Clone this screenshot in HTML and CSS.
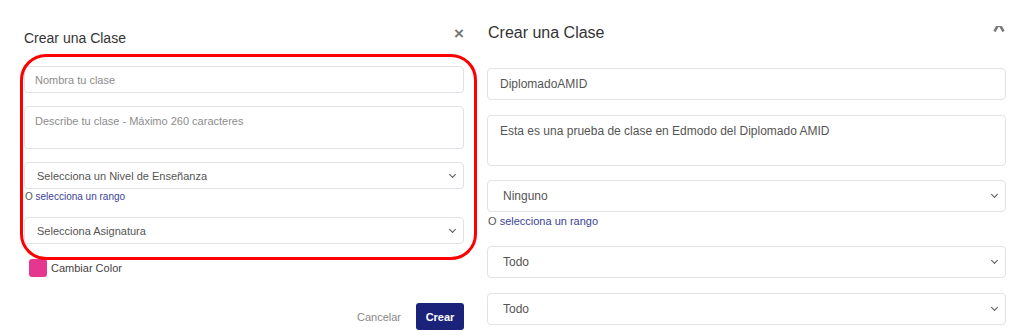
FILE: index.html
```html
<!DOCTYPE html>
<html lang="es">
<head>
  <meta charset="UTF-8" />
  <title>Crear una Clase</title>
  <link rel="stylesheet" href="styles.css">
</head>
<body>
  <!-- Modal vacío (antes de rellenar) -->
  <div class="modal modal-small">
    <div class="modal-head">
      <h2>Crear una Clase</h2>
      <span class="close">&times;</span>
    </div>

    <input type="text" class="field" placeholder="Nombra tu clase" />
    <textarea class="field area" placeholder="Describe tu clase - Máximo 260 caracteres"></textarea>

    <div class="select-wrap">
      <select class="field">
        <option>Selecciona un Nivel de Enseñanza</option>
      </select>
    </div>
    <div class="range">O <a href="#">selecciona un rango</a></div>

    <div class="select-wrap second">
      <select class="field">
        <option>Selecciona Asignatura</option>
      </select>
    </div>

    <div class="color-row">
      <span class="swatch"></span>
      <span>Cambiar Color</span>
    </div>

    <div class="actions">
      <a href="#" class="cancel">Cancelar</a>
      <button class="btn-create">Crear</button>
    </div>

    <div class="highlight"></div>
  </div>

  <!-- Modal con datos -->
  <div class="modal modal-large">
    <div class="modal-head">
      <h2>Crear una Clase</h2>
      <span class="close-cut">
        <svg width="12" height="6" viewBox="0 0 12 6">
          <path d="M6 -2.5 L1.5 5.5 M6 -2.5 L10.5 5.5" stroke="#7a7a7a" stroke-width="2.6" fill="none" />
        </svg>
      </span>
    </div>

    <input type="text" class="field" value="DiplomadoAMID" />
    <textarea class="field area">Esta es una prueba de clase en Edmodo del Diplomado AMID</textarea>

    <div class="select-wrap">
      <select class="field">
        <option>Ninguno</option>
      </select>
    </div>
    <div class="range">O <a href="#">selecciona un rango</a></div>

    <div class="select-wrap second">
      <select class="field">
        <option>Todo</option>
      </select>
    </div>
    <div class="select-wrap third">
      <select class="field">
        <option>Todo</option>
      </select>
    </div>
  </div>
</body>
</html>
```

FILE: styles.css
```css
body {
  margin: 0;
  display: flex;
  font-family: 'Liberation Sans', Arial, sans-serif;
  color: #333;
  background: #fff;
  height: 336px;
  overflow: hidden;
}
h2 {
  margin: 0;
  font-weight: normal;
}
input, textarea, select, button {
  font-family: inherit;
}

.modal {
  display: flex;
  flex-direction: column;
  position: relative;
}
.modal-small {
  width: 440px;
  padding-left: 24px;
  font-size: 11px;
}
.modal-large {
  width: 519px;
  margin-left: 23px;
  font-size: 12px;
}

.modal-head {
  display: flex;
  justify-content: space-between;
  align-items: flex-start;
}
.modal-small .modal-head {
  padding-top: 28px;
  height: 20px;
  margin-bottom: 18px;
}
.modal-small h2 {
  font-size: 14px;
  line-height: 20px;
}
.close {
  font-size: 17px;
  font-weight: bold;
  color: #777;
  line-height: 12px;
  margin-top: 0;
  margin-right: 0;
}
.modal-large .modal-head {
  padding-top: 23px;
  height: 20px;
  margin-bottom: 25px;
}
.modal-large h2 {
  font-size: 16px;
  line-height: 20px;
  padding-left: 1px;
}
.close-cut {
  display: block;
  margin-top: 3px;
  margin-right: 1px;
  line-height: 0;
}

.field {
  display: block;
  box-sizing: border-box;
  width: 100%;
  margin: 0;
  border: 1px solid #dfe2e6;
  border-radius: 4px;
  background: #fff;
  color: #555;
  outline: none;
}
.field::placeholder {
  color: #8d8d8d;
}
textarea.field {
  resize: none;
}
select.field {
  appearance: none;
  -webkit-appearance: none;
}

.modal-small .field {
  height: 27px;
  font-size: 11px;
  padding: 0 10px;
}
.modal-small .area {
  height: 43px;
  margin-top: 13px;
  padding-top: 7px;
  line-height: 14px;
}
.modal-small select.field {
  padding-left: 12px;
}
.modal-small .select-wrap {
  margin-top: 13px;
}
.modal-small .select-wrap.second {
  margin-top: 14px;
}

.modal-large .field {
  height: 32px;
  font-size: 12px;
  padding: 0 12px;
}
.modal-large .area {
  height: 51px;
  margin-top: 15px;
  padding-top: 8px;
  line-height: 15px;
}
.modal-large select.field {
  padding-left: 15px;
}
.modal-large .select-wrap {
  margin-top: 14px;
}
.modal-large .select-wrap.second {
  margin-top: 18px;
}
.modal-large .select-wrap.third {
  margin-top: 15px;
}

.select-wrap {
  position: relative;
}
.select-wrap::after {
  content: '';
  position: absolute;
  right: 9px;
  top: 50%;
  width: 4px;
  height: 4px;
  margin-top: -4px;
  border-right: 1.5px solid #555;
  border-bottom: 1.5px solid #555;
  transform: rotate(45deg);
}

.range {
  color: #555;
}
.range a {
  color: #3b3f98;
  text-decoration: none;
}
.modal-small .range {
  font-size: 10px;
  line-height: 12px;
  margin-top: 2px;
  padding-left: 1px;
}
.modal-large .range {
  font-size: 11px;
  line-height: 13px;
  margin-top: 3px;
  padding-left: 1px;
}

.color-row {
  display: flex;
  align-items: center;
  gap: 4px;
  margin-top: 15px;
  margin-left: 5px;
  color: #444;
}
.swatch {
  width: 18px;
  height: 18px;
  border-radius: 3px;
  background: #e63790;
}

.actions {
  display: flex;
  justify-content: flex-end;
  align-items: center;
  gap: 15px;
  margin-top: 26px;
}
.cancel {
  color: #888;
  text-decoration: none;
}
.btn-create {
  height: 27px;
  width: 48px;
  padding: 0;
  border: none;
  border-radius: 3px;
  background: #1b227a;
  color: #fff;
  font-size: 11px;
  font-weight: bold;
}

.highlight {
  position: absolute;
  left: 20px;
  top: 54px;
  width: 451px;
  height: 200px;
  border: 3px solid #f00;
  border-radius: 26px;
  pointer-events: none;
}
```
